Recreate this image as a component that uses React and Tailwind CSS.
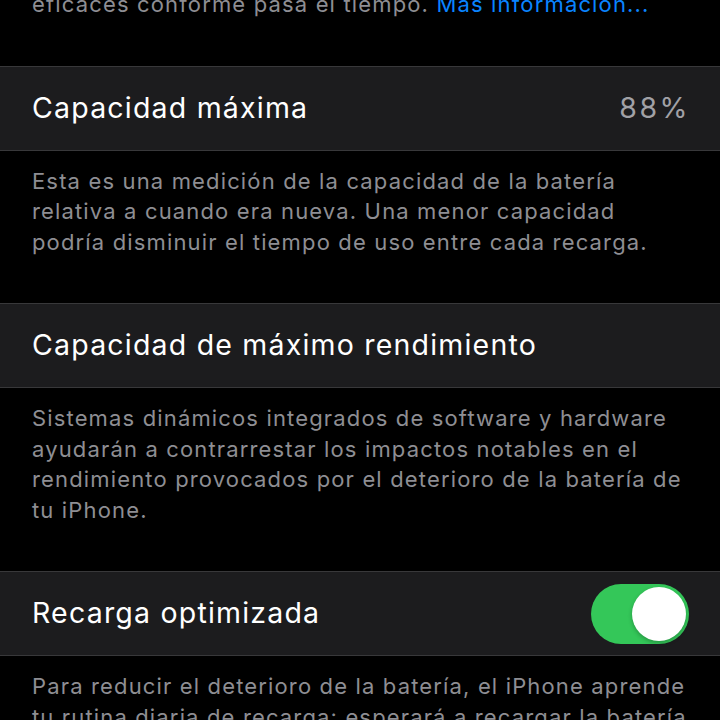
export default function App() {
  const desc = "px-8 pt-[15px] pb-[46px] text-[22px] leading-[30.5px] tracking-[1.15px] text-[#8e8e93]";
  const row = "h-[85px] bg-[#1c1c1e] border-y border-[#38383a] flex items-center justify-between px-8 text-[28.5px] tracking-[1.2px] text-white";
  return (
    <div className="w-[720px] h-[720px] overflow-hidden bg-black font-['Inter',sans-serif]">
      <div className="px-8 -mt-[11px] pb-[46px] text-[22px] leading-[30.5px] tracking-[1.15px] text-[#8e8e93]">
        eficaces conforme pasa el tiempo. <span className="text-[#0a84ff]">Más información...</span>
      </div>

      <div className={row}>
        <span>Capacidad máxima</span>
        <span className="text-[#a1a1a6] tracking-[2.5px] -mr-[2px]">88%</span>
      </div>
      <div className={desc}>
        Esta es una medición de la capacidad de la batería
        <br />
        relativa a cuando era nueva. Una menor capacidad
        <br />
        podría disminuir el tiempo de uso entre cada recarga.
      </div>

      <div className={row}>
        <span>Capacidad de máximo rendimiento</span>
      </div>
      <div className={desc}>
        Sistemas dinámicos integrados de software y hardware
        <br />
        ayudarán a contrarrestar los impactos notables en el
        <br />
        rendimiento provocados por el deterioro de la batería de
        <br />
        tu iPhone.
      </div>

      <div className={row + " pr-[31px]"}>
        <span>Recarga optimizada</span>
        <div className="w-[98px] h-[60px] rounded-full bg-[#34c759] flex items-center justify-end pr-[3px]">
          <div className="w-[54px] h-[54px] rounded-full bg-white shadow-[0_2px_4px_rgba(0,0,0,0.25)]" />
        </div>
      </div>
      <div className={desc}>
        Para reducir el deterioro de la batería, el iPhone aprende
        <br />
        tu rutina diaria de recarga: esperará a recargar la batería
      </div>
    </div>
  );
}
